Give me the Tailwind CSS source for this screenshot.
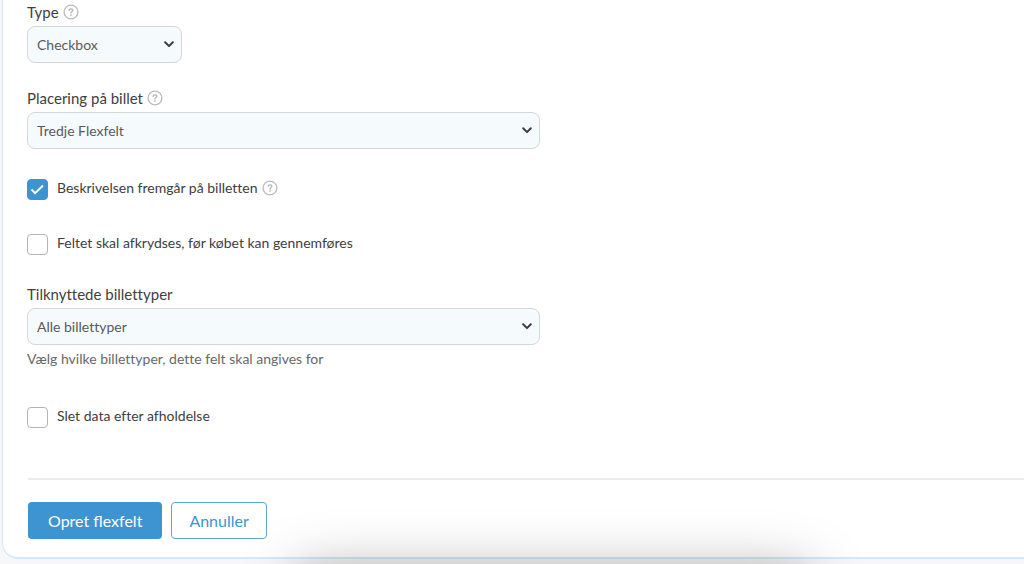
<!DOCTYPE html>
<html lang="da">
<head>
    <meta charset="UTF-8">
    <meta name="viewport" content="width=device-width, initial-scale=1.0">
    <title>Opret flexfelt</title>
    <script src="https://cdn.jsdelivr.net/npm/@tailwindcss/browser@4"></script>
</head>
<body class="bg-[#f7f7f9] font-['Lato','Open_Sans',sans-serif] [font-variant-ligatures:none] text-[15px] leading-5 text-[#404040] overflow-x-hidden">
    <!-- Symbols -->
    <svg class="hidden">
        <symbol id="help" viewBox="0 0 16 16">
            <circle cx="8" cy="8" r="6.9" fill="none" stroke="#bcbcbc" stroke-width="1.4"/>
            <path d="M6.1 6.4C6.2 5.3 7 4.8 8 4.8c1.100 0 1.900.6 1.900 1.500C9.900 7.600 8 7.500 8 9" fill="none" stroke="#b4b4b4" stroke-width="1.300" stroke-linecap="round"/>
            <circle cx="8" cy="11.100" r=".85" fill="#b4b4b4"/>
        </symbol>
        <symbol id="chevron" viewBox="0 0 10 7">
            <path d="M1.200 1.300 5 5.100l3.800-3.800" fill="none" stroke="#3c3c3c" stroke-width="2" stroke-linecap="round" stroke-linejoin="round"/>
        </symbol>
    </svg>

    <main class="pl-0.5">
        <form class="bg-white border-l border-b-2 border-[#d5e9f7] rounded-bl-2xl pt-0.5 pl-6 pb-[18px]">
            <!-- Type -->
            <div class="flex items-center gap-1 mb-1">
                <label for="type">Type</label>
                <svg class="size-4"><use href="#help"/></svg>
            </div>
            <div class="relative w-[155px]">
                <select id="type" class="appearance-none block w-full h-[37px] pl-[9px] pr-8 text-sm text-[#5a5a5a] bg-[#f5fafd] border border-[#d4d6d7] rounded-lg">
                    <option>Checkbox</option>
                </select>
                <svg class="absolute right-2 top-[15px] w-[10px] h-[7px] pointer-events-none"><use href="#chevron"/></svg>
            </div>

            <!-- Placering -->
            <div class="flex items-center gap-1 mt-[25px] mb-1">
                <label for="placement">Placering på billet</label>
                <svg class="size-4"><use href="#help"/></svg>
            </div>
            <div class="relative max-w-[513px]">
                <select id="placement" class="appearance-none block w-full h-[37px] pl-[9px] pr-8 text-sm text-[#5a5a5a] bg-[#f5fafd] border border-[#d4d6d7] rounded-lg">
                    <option>Tredje Flexfelt</option>
                </select>
                <svg class="absolute right-2 top-[15px] w-[10px] h-[7px] pointer-events-none"><use href="#chevron"/></svg>
            </div>

            <div class="flex items-start mt-[30px]">
                <div class="relative size-[21px] mr-[9px]">
                    <input type="checkbox" id="description" checked class="peer appearance-none block size-full bg-white border border-[#b4b4b4] rounded checked:bg-[#3d94d1] checked:border-[#3d94d1]">
                    <svg viewBox="0 0 21 21" class="hidden peer-checked:block absolute inset-0 size-full pointer-events-none"><path d="m4.500 10.500 3.600 3.600L16 6.500" fill="none" stroke="#fff" stroke-width="2"/></svg>
                </div>
                <label for="description" class="-mt-px mr-1 text-sm leading-5">Beskrivelsen fremgår på billetten</label>
                <svg class="size-4 mt-px"><use href="#help"/></svg>
            </div>

            <div class="flex items-start mt-[34px]">
                <input type="checkbox" id="required" class="appearance-none size-[21px] mr-[9px] bg-white border border-[#b4b4b4] rounded checked:bg-[#3d94d1]">
                <label for="required" class="-mt-px text-sm leading-5">Feltet skal afkrydses, før købet kan gennemføres</label>
            </div>

            <!-- Billettyper -->
            <div class="mt-[29px] mb-1">
                <label for="tickets" class="block">Tilknyttede billettyper</label>
            </div>
            <div class="relative max-w-[513px]">
                <select id="tickets" class="appearance-none block w-full h-[37px] pl-[9px] pr-8 text-sm text-[#5a5a5a] bg-[#f5fafd] border border-[#d4d6d7] rounded-lg">
                    <option>Alle billettyper</option>
                </select>
                <svg class="absolute right-2 top-[15px] w-[10px] h-[7px] pointer-events-none"><use href="#chevron"/></svg>
            </div>
            <p class="mt-1 text-sm leading-5 text-[#686868]">Vælg hvilke billettyper, dette felt skal angives for</p>

            <div class="flex items-start mt-[38px]">
                <input type="checkbox" id="delete" class="appearance-none size-[21px] mr-[9px] bg-white border border-[#b4b4b4] rounded checked:bg-[#3d94d1]">
                <label for="delete" class="-mt-px text-sm leading-5">Slet data efter afholdelse</label>
            </div>

            <hr class="mt-[50px] ml-px border-t-2 border-[#ececec]">

            <div class="flex gap-[9px] mt-[22px] ml-px text-base [font-variant-ligatures:normal]">
                <button type="submit" class="h-[37px] px-5 bg-[#3d94d1] text-white rounded">Opret flexfelt</button>
                <button type="button" class="h-[37px] px-[17px] bg-white text-[#3d94d1] border border-[#5ba6da] rounded">Annuller</button>
            </div>
        </form>
    </main>

    <!-- Shadow of the bar docked under the window -->
    <div class="fixed top-full left-[29%] right-[21%] h-20 mt-2 shadow-[0_0_56px_rgba(0,0,0,0.35)] pointer-events-none"></div>
</body>
</html>
